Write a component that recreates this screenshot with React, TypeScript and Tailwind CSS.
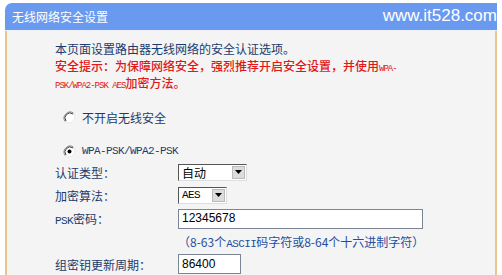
import React from "react";

const cjk = "font-['Noto_Sans_CJK_SC',sans-serif]";
const mono = "font-['Liberation_Mono',monospace] text-[11px] leading-none tracking-[-0.6px]";
const tiny = "font-['Liberation_Mono',monospace] text-[9px] leading-none tracking-[-1px]";

const Radio = ({ checked }: { checked?: boolean }) => (
  <svg width="13" height="13" viewBox="0 0 13 13" className="shrink-0">
    <circle cx="6.5" cy="6.5" r="6" fill="#ffffff" />
    <path d="M2.3 10.7 A6 6 0 0 1 10.7 2.3" stroke="#808080" strokeWidth="1" fill="none" />
    <path d="M3 10 A5 5 0 0 1 10 3" stroke="#404040" strokeWidth="1" fill="none" />
    <path d="M10.7 2.3 A6 6 0 0 1 2.3 10.7" stroke="#e4e4e4" strokeWidth="1" fill="none" />
    {checked && <circle cx="6.5" cy="6.5" r="2" fill="#000000" />}
  </svg>
);

const Select = ({ value, width, ascii }: { value: string; width: string; ascii?: boolean }) => (
  <div
    className={`flex h-[17px] items-stretch border border-t-[#555] border-l-[#555] border-b-[#ddd] border-r-[#ddd] bg-white ${width}`}
  >
    <div className={`flex flex-1 items-center pl-[3px] text-[#000] ${ascii ? mono : "text-[12px] " + cjk}`}>
      {value}
    </div>
    <div className="m-[1px] flex w-[13px] items-center justify-center border border-[#bbb] bg-[#dcdcdc]">
      <svg width="7" height="4" viewBox="0 0 7 4">
        <path d="M0 0 H7 L3.5 4 Z" fill="#000" />
      </svg>
    </div>
  </div>
);

const Field = ({ label, children, h }: { label: React.ReactNode; children: React.ReactNode; h: string }) => (
  <div className={`flex items-center ${h}`}>
    <div className="w-[123px] shrink-0">{label}</div>
    {children}
  </div>
);

export default function App() {
  return (
    <div className="h-[275px] w-[502px] overflow-hidden bg-white pt-[3px]">
      <div className="ml-[5px] w-[492px]">
        <div className="relative flex h-[27px] items-center rounded-tl-[7px] bg-[#6a9af0] pl-[7px]">
          <span className={`text-[12px] text-white ${cjk}`}>无线网络安全设置</span>
          <span className="absolute right-0 top-[3px] font-['Liberation_Sans',sans-serif] text-[17px] leading-[20px] text-white">
            www.it528.com
          </span>
        </div>
        <div className="h-[1px] bg-[#eef3fb]" />
        <div className={`h-[245px] border-x-2 border-[#ebc58c] bg-[#f4f4f4] pl-[48px] pt-[9px] text-[12px] leading-[17px] text-[#1d3a6c] ${cjk}`}>
          <p className="h-[17px]">本页面设置路由器无线网络的安全认证选项。</p>
          <p className="h-[17px] font-medium text-[#e01818]">
            安全提示：为保障网络安全，强烈推荐开启安全设置，并使用<span className={tiny}>WPA-</span>
          </p>
          <p className="h-[17px] font-medium text-[#e01818]">
            <span className={tiny}>PSK/WPA2-PSK AES</span>加密方法。
          </p>

          <div className="mt-[16px] flex h-[20px] items-center gap-[6px] pl-[8px]">
            <Radio />
            <span>不开启无线安全</span>
          </div>

          <div className="mt-[14px] flex h-[20px] items-center gap-[6px] pl-[8px]">
            <Radio checked />
            <span className={mono}>WPA-PSK/WPA2-PSK</span>
          </div>

          <Field label="认证类型：" h="h-[22px]">
            <Select value="自动" width="w-[69px]" />
          </Field>
          <Field label="加密算法：" h="h-[24px]">
            <Select value="AES" width="w-[49px]" ascii />
          </Field>
          <Field
            label={
              <span>
                <span className={mono}>PSK</span>密码：
              </span>
            }
            h="h-[23px]"
          >
            <div className="flex h-[20px] w-[245px] items-center border border-[#7c8494] bg-white pl-[3px] font-['Liberation_Sans',sans-serif] text-[12px] text-black">
              12345678
            </div>
          </Field>
          <div className="flex h-[23px] items-center pl-[123px] text-[#1f4f9e]">
            <span>
              （8-63个<span className={mono}>ASCII</span>码字符或8-64个十六进制字符）
            </span>
          </div>
          <Field label="组密钥更新周期：" h="h-[22px]">
            <div className="flex h-[20px] w-[63px] items-center border border-[#7c8494] bg-white pl-[3px] font-['Liberation_Sans',sans-serif] text-[12px] text-black">
              86400
            </div>
          </Field>
        </div>
      </div>
    </div>
  );
}
